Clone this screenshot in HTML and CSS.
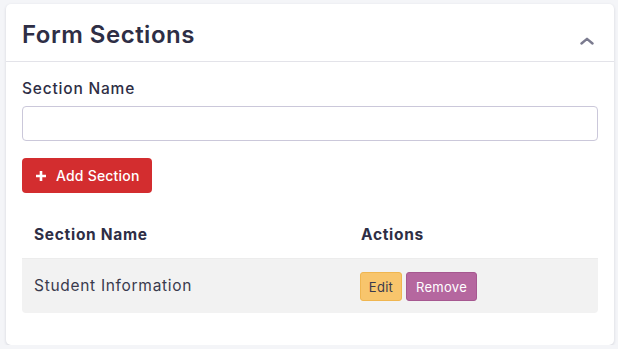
FILE: index.html
```html
<!DOCTYPE html>
<html lang="en">
<head>
<meta charset="utf-8">
<title>Form Sections</title>
<link rel="stylesheet" href="styles.css">
</head>
<body>
<div class="card">
  <div class="card-header">
    <h2 class="card-title">Form Sections</h2>
    <button class="collapse-btn" aria-label="Collapse">
      <svg width="14" height="8" viewBox="0 0 14 8"><polyline points="1.5,6.5 7,1.8 12.5,6.5" fill="none" stroke="#7b7b8f" stroke-width="2.4" stroke-linecap="round" stroke-linejoin="round"/></svg>
    </button>
  </div>
  <div class="card-body">
    <label class="field-label" for="sname">Section Name</label>
    <input class="field-input" id="sname" type="text">
    <button class="btn btn-add">
      <svg width="12" height="12" viewBox="0 0 12 12"><path d="M6 1v10M1 6h10" stroke="#fff" stroke-width="2.6" stroke-linecap="butt"/></svg>
      <span>Add Section</span>
    </button>
    <table class="sections">
      <thead>
        <tr><th class="col-name">Section Name</th><th>Actions</th></tr>
      </thead>
      <tbody>
        <tr>
          <td class="col-name">Student Information</td>
          <td><div class="actions"><button class="btn-sm btn-edit">Edit</button><button class="btn-sm btn-remove">Remove</button></div></td>
        </tr>
      </tbody>
    </table>
  </div>
</div>
</body>
</html>
```

FILE: styles.css
```css
* { box-sizing: border-box; }
body {
  margin: 0;
  background: #f4f5f8;
  font-family: "Inter", "Open Sans", sans-serif;
  color: #33334a;
}
.card {
  margin: 4px 4px 0 6px;
  width: 608px;
  height: 341px;
  background: #fff;
  border-radius: 5px;
  box-shadow: 0 1px 3px rgba(40, 40, 70, 0.16);
}
.card-header {
  height: 58px;
  display: flex;
  align-items: center;
  justify-content: space-between;
  padding: 0 20px 0 16px;
  border-bottom: 1px solid #e3e3e9;
}
.card-title {
  margin: 4px 0 0 0;
  font-size: 24px;
  font-weight: 600;
  color: #2e2e45;
  letter-spacing: 0.5px;
}
.collapse-btn {
  align-self: flex-start;
  border: 0;
  background: none;
  padding: 0;
  display: flex;
  margin-top: 33px;
}
.card-body {
  padding: 16px 16px 0 16px;
}
.field-label {
  display: block;
  font-size: 15.5px;
  line-height: 22px;
  font-weight: 500;
  color: #2e2e45;
  letter-spacing: 0.8px;
  margin-bottom: 6px;
}
.field-input {
  display: block;
  width: 100%;
  height: 35px;
  border: 1px solid #cbc8da;
  border-radius: 4px;
  background: #fff;
  outline: none;
}
.btn {
  display: flex;
  align-items: center;
  gap: 9px;
  border: 0;
  font-family: inherit;
}
.btn-add {
  margin-top: 17px;
  height: 35px;
  width: 130px;
  padding: 0 0 0 13px;
  background: #d32d2f;
  color: #fff;
  border-radius: 4px;
  font-size: 14px;
  font-weight: 500;
  letter-spacing: 0.2px;
}
.sections {
  margin-top: 18px;
  width: 100%;
  border-collapse: collapse;
}
.sections th {
  height: 47px;
  text-align: left;
  font-size: 15.5px;
  font-weight: 700;
  letter-spacing: 0.7px;
  color: #2e2e45;
  padding: 0 12px;
}
.sections th.col-name { width: 327px; }
.sections tbody tr { background: #f2f2f2; }
.sections td {
  height: 55px;
  padding: 0 12px;
  font-size: 15.5px;
  letter-spacing: 0.7px;
  color: #3a3a4d;
  border-top: 1px solid #ececec;
}
.sections td:first-child { border-bottom-left-radius: 4px; }
.sections td:last-child { border-bottom-right-radius: 4px; padding-left: 11px; }
.actions {
  display: flex;
  gap: 4px;
  margin-top: 2px;
}
.btn-sm {
  height: 29px;
  border-radius: 3px;
  font-family: inherit;
  font-size: 13px;
  letter-spacing: 0.3px;
  padding: 0;
}
.btn-edit {
  width: 42px;
  background: #f8c56c;
  border: 1px solid #f0b650;
  color: #3a3a4d;
}
.btn-remove {
  width: 71px;
  background: #b5679f;
  border: 1px solid #a65890;
  color: #fff;
}
```
